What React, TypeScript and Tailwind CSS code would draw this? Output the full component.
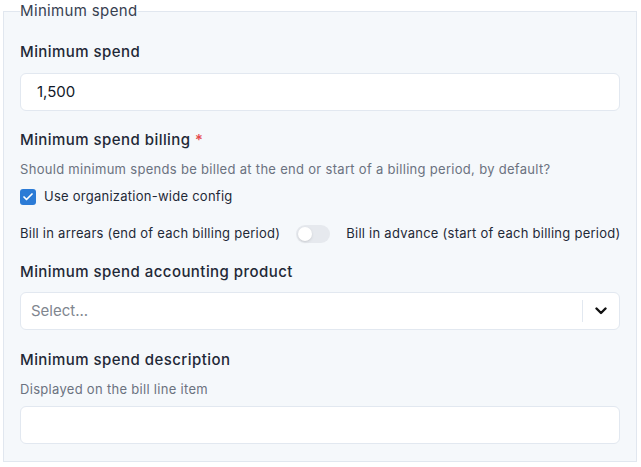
import { Check } from 'lucide-react';

const font = { fontFamily: 'Inter, "Noto Sans", sans-serif' };

function Label({ children }: { children: React.ReactNode }) {
  return (
    <div className="text-[15px] font-medium leading-[22px] tracking-[0.45px] text-[#1f2937]">{children}</div>
  );
}

function Hint({ children }: { children: React.ReactNode }) {
  return <div className="text-[13px] leading-[20px] tracking-[0.3px] text-[#6b7280]">{children}</div>;
}

export default function App() {
  return (
    <div className="min-h-[467px] bg-white" style={font}>
      <fieldset className="mx-[3px] mr-[4px] border border-[#e1e7ef] bg-[#f5f8fb] px-4 pb-[17px] pt-[19px]">
        <legend className="text-[15px] leading-[22px] tracking-[0.35px] text-[#374151]">Minimum spend</legend>

        <div className="flex flex-col">
          <Label>Minimum spend</Label>
          <div className="mt-[10px] flex h-[38px] items-center rounded-md border border-[#e2e8f0] bg-white px-4 text-[15px] text-[#111827]">
            1,500
          </div>

          <div className="mt-[18px]">
            <Label>
              Minimum spend billing <span className="text-[#e5484d]">*</span>
            </Label>
          </div>
          <div className="mt-2">
            <Hint>Should minimum spends be billed at the end or start of a billing period, by default?</Hint>
          </div>
          <div className="mt-2 flex h-5 items-center gap-2">
            <span className="flex h-4 w-4 items-center justify-center rounded-[3px] bg-[#2b7bd6]">
              <Check className="h-3 w-3 text-white" strokeWidth={3.5} />
            </span>
            <span className="text-[13px] tracking-[0.25px] text-[#1f2937]">Use organization-wide config</span>
          </div>

          <div className="mt-4 flex h-[22px] items-center whitespace-nowrap text-[13px] tracking-[0.25px] text-[#1f2937]">
            <span className="shrink-0">Bill in arrears (end of each billing period)</span>
            <span className="ml-4 flex h-[18px] w-[34px] shrink-0 items-center rounded-full bg-[#e6e9ee] p-[2px]">
              <span className="h-[14px] w-[14px] rounded-full bg-white shadow-sm" />
            </span>
            <span className="ml-4 shrink-0">Bill in advance (start of each billing period)</span>
          </div>

          <div className="mt-4">
            <Label>Minimum spend accounting product</Label>
          </div>
          <div className="mt-[9px] flex h-[38px] items-center rounded-md border border-[#e2e8f0] bg-white">
            <span className="flex-1 pl-[10px] text-[15px] text-[#80868f]">Select...</span>
            <span className="h-[22px] w-px bg-[#e2e8f0]" />
            <span className="flex w-[36px] items-center justify-center">
              <svg width="12" height="8" viewBox="0 0 12 8" fill="none">
                <path d="M1.5 1.5L6 6l4.5-4.5" stroke="#111" strokeWidth="2.4" strokeLinecap="round" strokeLinejoin="round" />
              </svg>
            </span>
          </div>

          <div className="mt-[19px]">
            <Label>Minimum spend description</Label>
          </div>
          <div className="mt-2">
            <Hint>Displayed on the bill line item</Hint>
          </div>
          <div className="mt-[7px] h-[38px] rounded-md border border-[#e2e8f0] bg-white" />
        </div>
      </fieldset>
    </div>
  );
}
